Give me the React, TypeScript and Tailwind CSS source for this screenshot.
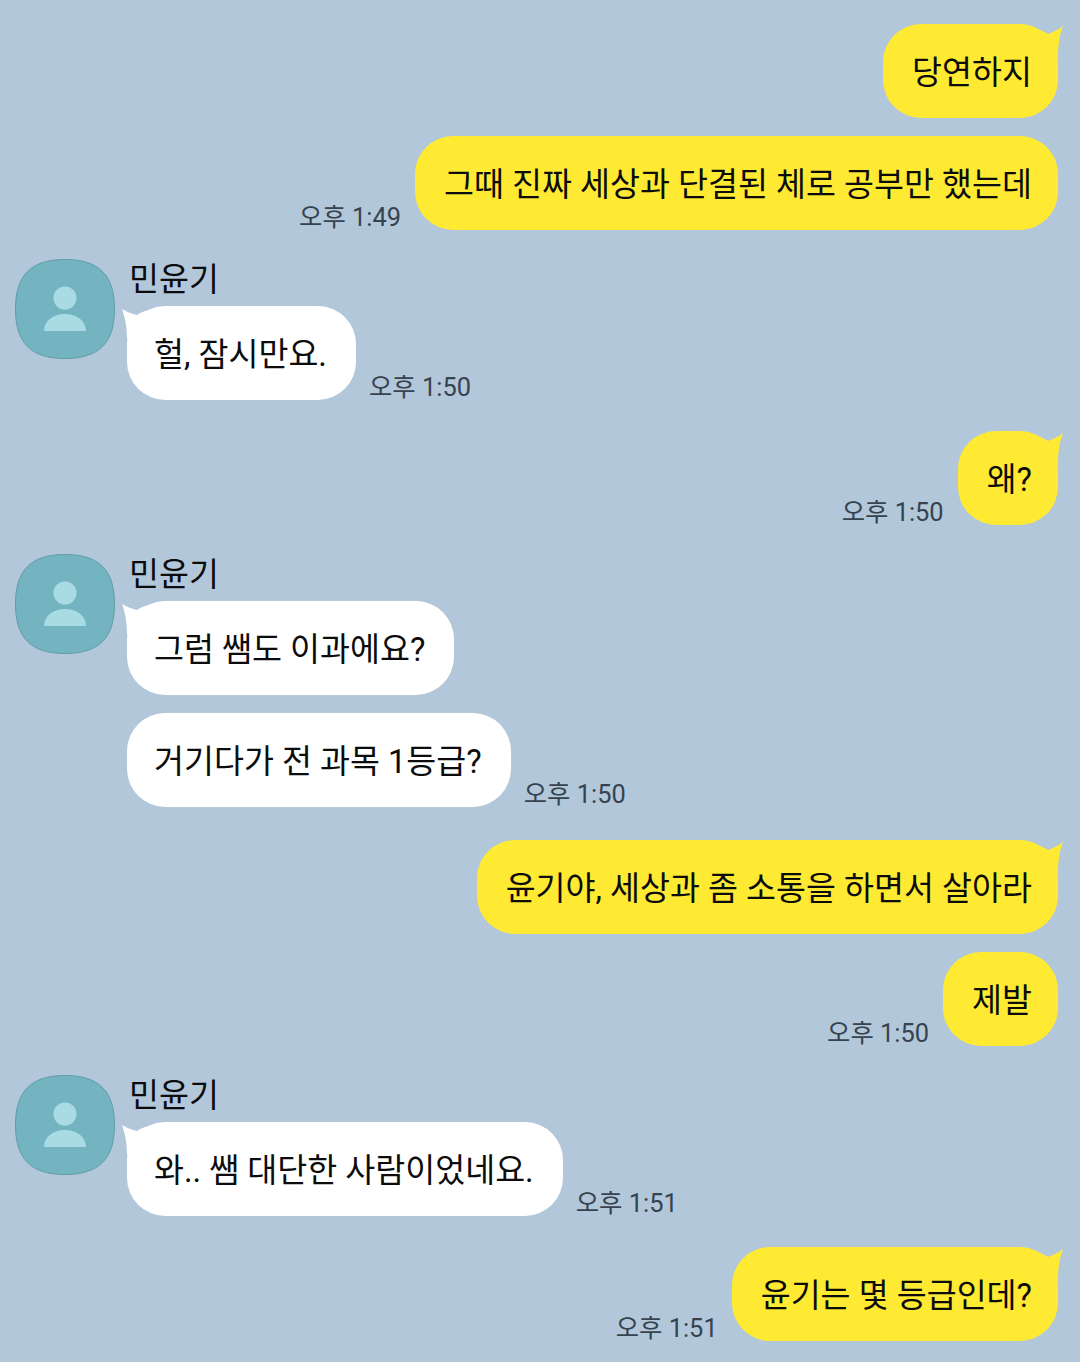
import type { ReactNode } from 'react'

const FONT = "font-['Roboto','Noto_Sans_CJK_KR',sans-serif]"

function Bubble({ mine, tail, children }: { mine?: boolean; tail?: boolean; children: ReactNode }) {
  return (
    <div
      className={
        'relative h-[94px] flex items-center rounded-[38px] pt-1 text-[32.6px] leading-none text-[#0c0c0c] whitespace-nowrap ' +
        (mine ? 'bg-[#ffea33] pl-[29px] pr-[26px]' : 'bg-white pl-[27px] pr-[29px]')
      }
    >
      {tail && mine && (
        <svg className="absolute right-[-5px] top-[2px]" width="30" height="30" viewBox="0 0 30 30">
          <path d="M0 4 C6 4 11 5 15 8 C20 6 25 4 30 0 C27 8 25 18 25 30 L0 30 Z" fill="#ffea33" />
        </svg>
      )}
      {tail && !mine && (
        <svg className="absolute left-[-5px] top-[3px]" width="30" height="30" viewBox="0 0 30 30">
          <path d="M30 1 C24 1 19 3 15 6 C10 5 5 3 0 0 C3 8 5 18 5 30 L30 30 Z" fill="#ffffff" />
        </svg>
      )}
      <span className="relative">{children}</span>
    </div>
  )
}

function Time({ children }: { children: ReactNode }) {
  return <span className="text-[25.4px] leading-[26px] text-[#36434f] whitespace-nowrap">{children}</span>
}

function Avatar() {
  return (
    <svg className="shrink-0" width="100" height="100" viewBox="0 0 100 100">
      <path
        d="M50 0.5 C84 0.5 99.5 16 99.5 50 C99.5 84 84 99.5 50 99.5 C16 99.5 0.5 84 0.5 50 C0.5 16 16 0.5 50 0.5 Z"
        fill="#74b4c0"
        stroke="#5f9da8"
        strokeWidth="1"
      />
      <circle cx="50" cy="39" r="11.5" fill="#a8dbe3" />
      <path d="M29 72 C29 62 38 55 50 55 C62 55 71 62 71 72 Z" fill="#a8dbe3" />
    </svg>
  )
}

function MyRow({ time, mt, tail, children }: { time?: string; mt: string; tail?: boolean; children: ReactNode }) {
  return (
    <div className={'flex justify-end items-end gap-[14px] pr-[22px] ' + mt}>
      {time && <Time>{time}</Time>}
      <Bubble mine tail={tail}>{children}</Bubble>
    </div>
  )
}

function TheirRow({ time, children }: { time?: string; children: ReactNode }) {
  return (
    <div className="flex items-end gap-[13px]">
      <Bubble tail>{children}</Bubble>
      {time && <Time>{time}</Time>}
    </div>
  )
}

function Name() {
  return <div className="h-[47px] pl-[2px] pt-[2px] text-[32.6px] leading-[38px] text-[#0c0c0c]">민윤기</div>
}

export default function App() {
  return (
    <div className={'h-[1362px] overflow-hidden bg-[#b2c7da] pt-[24px] ' + FONT}>
      <MyRow mt="" tail>당연하지</MyRow>
      <MyRow mt="mt-[18px]" time="오후 1:49">그때 진짜 세상과 단결된 체로 공부만 했는데</MyRow>

      <div className="flex gap-[12px] pl-[15px] mt-[29px]">
        <Avatar />
        <div>
          <Name />
          <TheirRow time="오후 1:50">헐, 잠시만요.</TheirRow>
        </div>
      </div>

      <MyRow mt="mt-[31px]" tail time="오후 1:50">왜?</MyRow>

      <div className="flex gap-[12px] pl-[15px] mt-[29px]">
        <Avatar />
        <div>
          <Name />
          <TheirRow>그럼 쌤도 이과에요?</TheirRow>
          <div className="mt-[18px] flex items-end gap-[13px]">
            <Bubble>거기다가 전 과목 1등급?</Bubble>
            <Time>오후 1:50</Time>
          </div>
        </div>
      </div>

      <MyRow mt="mt-[33px]" tail>윤기야, 세상과 좀 소통을 하면서 살아라</MyRow>
      <MyRow mt="mt-[18px]" time="오후 1:50">제발</MyRow>

      <div className="flex gap-[12px] pl-[15px] mt-[29px]">
        <Avatar />
        <div>
          <Name />
          <TheirRow time="오후 1:51">와.. 쌤 대단한 사람이었네요.</TheirRow>
        </div>
      </div>

      <MyRow mt="mt-[31px]" tail time="오후 1:51">윤기는 몇 등급인데?</MyRow>
    </div>
  )
}
